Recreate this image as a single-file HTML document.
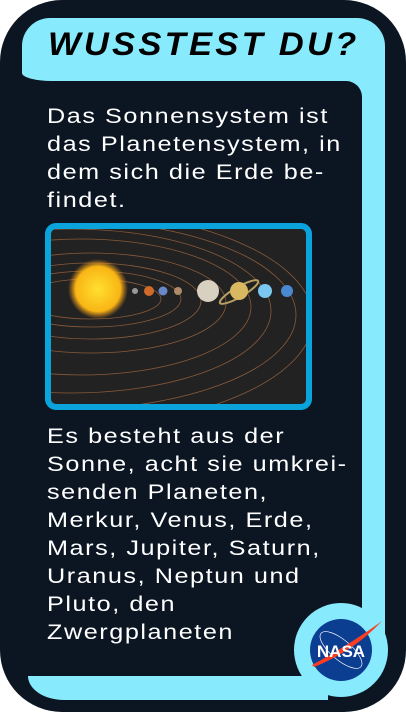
<!DOCTYPE html>
<html><head><meta charset="utf-8"><style>
html,body{margin:0;padding:0;background:#fff;width:406px;height:718px;overflow:hidden}
.card{position:absolute;left:0;top:0;width:406px;height:712px;background:#0c1622;border-radius:62px}
.hdr{position:absolute;left:22px;top:18px;width:363px;height:63px;background:#87ebfd;border-radius:28px 28px 0 30px / 28px 28px 0 8px}
.rstrip{position:absolute;left:362px;top:70px;width:23px;height:590px;background:#87ebfd;border-radius:0 0 20px 0}
.rcut{position:absolute;left:346px;top:81px;width:16px;height:16px;background:#0c1622;border-top-right-radius:16px}
.rfill{position:absolute;left:346px;top:81px;width:16px;height:16px;background:#87ebfd}
.bstrip{position:absolute;left:28px;top:676px;width:300px;height:24px;background:#87ebfd;border-radius:0 0 0 36px / 0 0 0 24px}
.title{position:absolute;left:48px;top:26px;font:italic bold 32px "Liberation Sans",sans-serif;color:#000;letter-spacing:3px;white-space:nowrap;transform:scaleX(1.08);transform-origin:left}
.txt{position:absolute;left:47px;color:#fff;font:21px/28px "Liberation Sans",sans-serif;letter-spacing:1.3px;white-space:nowrap;transform:scaleX(1.2);transform-origin:left}
.img{position:absolute;left:45px;top:223px;width:255px;height:175px;border:6px solid #0aa3dc;border-radius:11px;background:#222;overflow:hidden}
.nasa{position:absolute;left:294px;top:603px;width:94px;height:94px;border-radius:50%;background:#87ebfd}
</style></head><body>
<div class="card"></div>
<div class="hdr"></div>
<div class="rstrip"></div>
<div class="rfill"></div><div class="rcut"></div>
<div class="bstrip"></div>
<div class="title">WUSSTEST DU?</div>
<div class="txt" style="top:103px">Das Sonnensystem ist<br>das Planetensystem, in<br>dem sich die Erde be-<br>findet.</div>
<div class="img">
<svg width="255" height="175" viewBox="0 0 255 175">
<defs><radialGradient id="s"><stop offset="0" stop-color="#ffe030"/><stop offset=".75" stop-color="#f9b515"/><stop offset="1" stop-color="#e8901a" stop-opacity="0"/></radialGradient></defs>
<g fill="none" stroke="#8a5a3a" stroke-width=".8">
<ellipse cx="40" cy="70" rx="70" ry="20"/>
<ellipse cx="40" cy="70" rx="90" ry="28"/>
<ellipse cx="40" cy="72" rx="110" ry="38"/>
<ellipse cx="40" cy="74" rx="135" ry="50"/>
<ellipse cx="30" cy="78" rx="170" ry="68"/>
<ellipse cx="20" cy="82" rx="200" ry="82"/>
<ellipse cx="10" cy="86" rx="235" ry="95"/>
<ellipse cx="0" cy="90" rx="262" ry="110"/>
</g>
<circle cx="47" cy="60" r="30" fill="url(#s)"/>
<circle cx="84" cy="62" r="3" fill="#999"/>
<circle cx="98" cy="62" r="5" fill="#d06a2a"/>
<circle cx="112" cy="62" r="4.5" fill="#6a88c8"/>
<circle cx="127" cy="62" r="4" fill="#b08a6a"/>
<circle cx="157" cy="62" r="11" fill="#d8d0c0"/>
<ellipse cx="188" cy="63" rx="22" ry="5" fill="none" stroke="#b8a060" stroke-width="2" transform="rotate(-30 188 63)"/>
<circle cx="188" cy="62" r="9" fill="#d8b860"/>
<circle cx="214" cy="62" r="7" fill="#7ac8f0"/>
<circle cx="236" cy="62" r="6" fill="#4a88d0"/>
</svg></div>
<div class="txt" style="top:423px">Es besteht aus der<br>Sonne, acht sie umkrei-<br>senden Planeten,<br>Merkur, Venus, Erde,<br>Mars, Jupiter, Saturn,<br>Uranus, Neptun und<br>Pluto, den<br>Zwergplaneten</div>
<div class="nasa"><svg width="94" height="94" viewBox="0 0 94 94">
<circle cx="47" cy="47" r="31" fill="#0b3d91"/>
<ellipse cx="47" cy="47" rx="26" ry="10" fill="none" stroke="#fff" stroke-width=".7" transform="rotate(40 47 47)"/>
<path d="M18 62 Q55 42 88 18 Q60 48 20 64Z" fill="#fc3d21"/>
<text x="47" y="54" text-anchor="middle" font-family="Liberation Sans" font-weight="bold" font-size="17" fill="#fff">NASA</text>
</svg></div>
</body></html>
